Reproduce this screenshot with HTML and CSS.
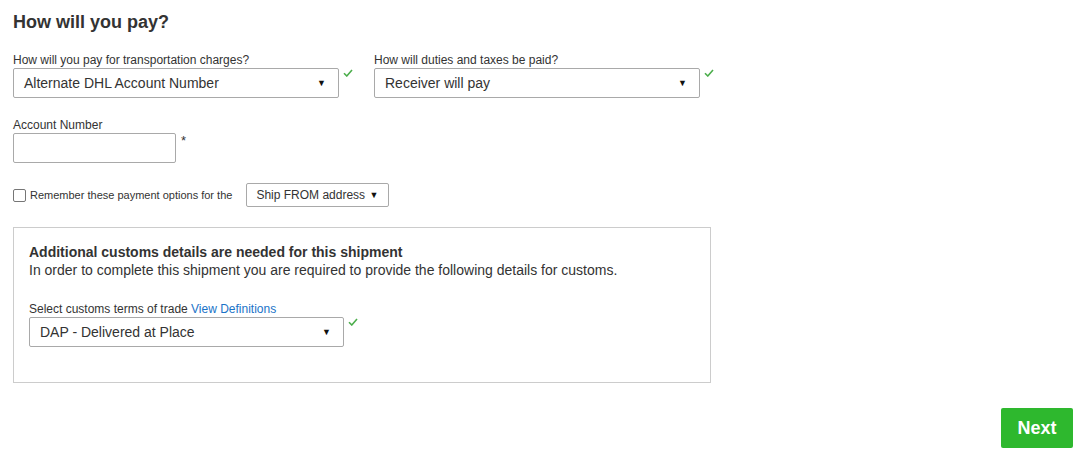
FILE: index.html
```html
<!DOCTYPE html>
<html>
<head>
<meta charset="utf-8">
<link rel="stylesheet" href="styles.css">
</head>
<body>
<div class="page">
  <h1 class="title">How will you pay?</h1>
  <div class="row two">
    <div class="field">
      <label class="lbl">How will you pay for transportation charges?</label>
      <div class="ctl">
        <div class="select wide"><span>Alternate DHL Account Number</span><span class="arrow">▼</span></div>
        <svg class="check" viewBox="0 0 10 8" width="10" height="8"><path d="M1 4.2 L3.8 7 L9 1" fill="none" stroke="#4cae4c" stroke-width="1.6"/></svg>
      </div>
    </div>
    <div class="field">
      <label class="lbl">How will duties and taxes be paid?</label>
      <div class="ctl">
        <div class="select wide"><span>Receiver will pay</span><span class="arrow">▼</span></div>
        <svg class="check" viewBox="0 0 10 8" width="10" height="8"><path d="M1 4.2 L3.8 7 L9 1" fill="none" stroke="#4cae4c" stroke-width="1.6"/></svg>
      </div>
    </div>
  </div>
  <div class="field acct">
    <label class="lbl">Account Number</label>
    <div class="ctl">
      <div class="input"></div>
      <span class="req">*</span>
    </div>
  </div>
  <div class="remember">
    <span class="cb"></span>
    <span class="rtext">Remember these payment options for the</span>
    <div class="mini"><span>Ship FROM address</span><span class="arrow">▼</span></div>
  </div>
  <div class="box">
    <div class="bhead">Additional customs details are needed for this shipment</div>
    <div class="btext">In order to complete this shipment you are required to provide the following details for customs.</div>
    <div class="field terms">
      <label class="lbl">Select customs terms of trade <a class="link">View Definitions</a></label>
      <div class="ctl">
        <div class="select tw"><span>DAP - Delivered at Place</span><span class="arrow">▼</span></div>
        <svg class="check" viewBox="0 0 10 8" width="10" height="8"><path d="M1 4.2 L3.8 7 L9 1" fill="none" stroke="#4cae4c" stroke-width="1.6"/></svg>
      </div>
    </div>
  </div>
  <div class="actions">
    <button class="next">Next</button>
  </div>
</div>
</body>
</html>
```

FILE: styles.css
```css
* { box-sizing: border-box; }
body {
  margin: 0;
  font-family: "Liberation Sans", Arial, sans-serif;
  color: #333;
  background: #fff;
}
.page { padding: 10px 15px 0 13px; }
.title {
  margin: 0;
  font-size: 18px;
  font-weight: bold;
  line-height: 24px;
  color: #333;
}
.row.two {
  display: flex;
  gap: 21px;
  margin-top: 19px;
}
.field { display: flex; flex-direction: column; }
.lbl {
  font-size: 12px;
  line-height: 14px;
  color: #333;
  margin-bottom: 1px;
}
.ctl { display: flex; align-items: flex-start; gap: 4px; }
.select {
  height: 30px;
  border: 1px solid #a9a9a9;
  border-radius: 2px;
  display: flex;
  align-items: center;
  justify-content: space-between;
  padding: 0 12px 0 10px;
  font-size: 14px;
  color: #333;
  background: #fff;
}
.select.wide { width: 326px; }
.select.tw { width: 315px; }
.arrow { font-size: 9px; color: #111; }
.check { margin-top: 1px; }
.acct { margin-top: 20px; }
.input {
  width: 163px;
  height: 30px;
  border: 1px solid #a9a9a9;
  border-radius: 2px;
}
.req { font-size: 13px; line-height: 14px; margin-top: 1px; margin-left: 1px; }
.remember {
  display: flex;
  align-items: center;
  margin-top: 20px;
  font-size: 11px;
}
.cb {
  width: 13px; height: 13px;
  border: 1px solid #767676;
  border-radius: 2px;
  margin-right: 4px;
}
.rtext { margin-right: 14px; }
.mini {
  height: 24px;
  width: 143px;
  border: 1px solid #a9a9a9;
  border-radius: 2px;
  display: flex;
  align-items: center;
  justify-content: space-between;
  padding: 0 10px 0 9px;
  font-size: 12px;
}
.mini .arrow { font-size: 9px; }
.box {
  margin-top: 20px;
  width: 698px;
  height: 156px;
  border: 1px solid #ccc;
  padding: 16px 15px 0 15px;
}
.bhead { font-size: 14px; font-weight: bold; line-height: 17px; }
.btext { font-size: 14px; line-height: 17px; margin-top: 1px; }
.terms { margin-top: 23px; }
.link { color: #1a73c8; text-decoration: none; }
.actions { display: flex; justify-content: flex-end; margin-top: 25px; }
.next {
  width: 72px; height: 40px;
  background: #2eb82e;
  color: #fff;
  border: 0;
  border-radius: 2px;
  font-family: "Liberation Sans", Arial, sans-serif;
  font-weight: bold;
  font-size: 18px;
}
```
